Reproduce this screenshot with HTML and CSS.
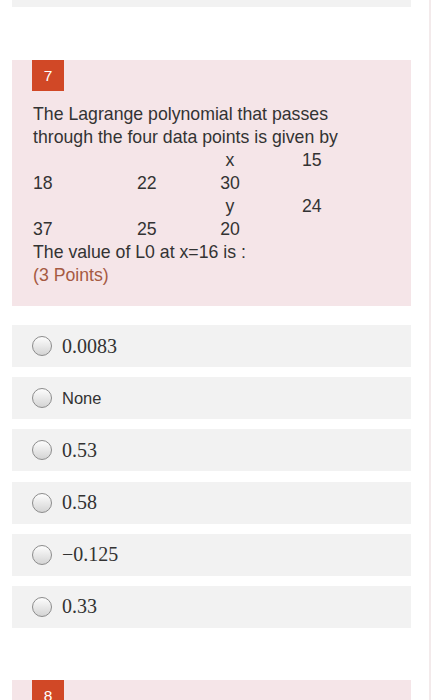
FILE: index.html
```html
<!DOCTYPE html>
<html lang="en">
<head>
    <meta charset="UTF-8">
    <meta name="viewport" content="width=device-width, initial-scale=1.0">
    <title>Quiz</title>

    <link rel="stylesheet" href="styles.css">
</head>
<body>
    <div class="page">
        <div class="prev-box"></div>

        <div class="question">
            <div class="badge">7</div>
            <div class="q-text">
                <p>The Lagrange polynomial that passes through the four data points is given by</p>
                <div class="data">
                    <span></span><span></span><span class="mid">x</span><span>15</span>
                    <span>18</span><span>22</span><span class="mid">30</span><span></span>
                    <span></span><span></span><span class="mid">y</span><span>24</span>
                    <span>37</span><span>25</span><span class="mid">20</span><span></span>
                </div>
                <p>The value of L0 at x=16 is :</p>
                <p class="points">(3 Points)</p>
            </div>
        </div>

        <div class="options">
            <label class="option"><span class="radio"></span><span class="serif">0.0083</span></label>
            <label class="option"><span class="radio"></span><span>None</span></label>
            <label class="option"><span class="radio"></span><span class="serif">0.53</span></label>
            <label class="option"><span class="radio"></span><span class="serif">0.58</span></label>
            <label class="option"><span class="radio"></span><span class="serif">&minus;0.125</span></label>
            <label class="option"><span class="radio"></span><span class="serif">0.33</span></label>
        </div>

        <div class="question next">
            <div class="badge">8</div>
        </div>
    </div>
</body>
</html>
```

FILE: styles.css
```css
body{
    margin: 0;
    font-family: "Liberation Sans", Arial, sans-serif;
    color: #333;
    background: #fff;
}

.page{
    width: 429px;
    height: 700px;
    overflow: hidden;
    border-right: 2px solid #f3eaeb;
}

.prev-box{
    margin: 0 18px 0 12px;
    height: 7px;
    background-color: #f2f2f2;
}

.question{
    margin: 53px 18px 0 12px;
    padding: 0 20px 19px 20px;
    background-color: #f5e5e8;
}

.badge{
    width: 32px;
    height: 31px;
    line-height: 31px;
    text-align: center;
    background-color: #d14826;
    color: #fff;
    font-size: 15.5px;
}

.q-text{
    margin-top: 12px;
    padding-left: 1px;
    font-size: 17.7px;
    line-height: 23px;
}

.q-text p{
    margin: 0;
}

.data{
    display: grid;
    grid-template-columns: 104px 83px 20px 62px auto;
}

.data span:nth-child(4n){
    grid-column: 5;
}

.data .mid{
    white-space: nowrap;
    display: flex;
    justify-content: center;
}

.points{
    color: #a65a42;
}

.options{
    margin: 19px 18px 0 12px;
    display: flex;
    flex-direction: column;
    gap: 10.2px;
}

.option{
    height: 42px;
    display: flex;
    align-items: center;
    gap: 10px;
    padding-left: 20px;
    background-color: #f2f2f2;
    font-size: 16.5px;
}

.radio{
    width: 18px;
    height: 18px;
    border: 1px solid #8c8c8c;
    border-radius: 50%;
    background: linear-gradient(#fdfdfd, #d4d4d4);
}

.serif{
    font-family: "Liberation Serif", "Times New Roman", serif;
    font-size: 20px;
}

.question.next{
    margin-top: 52px;
    height: 40px;
}
```
